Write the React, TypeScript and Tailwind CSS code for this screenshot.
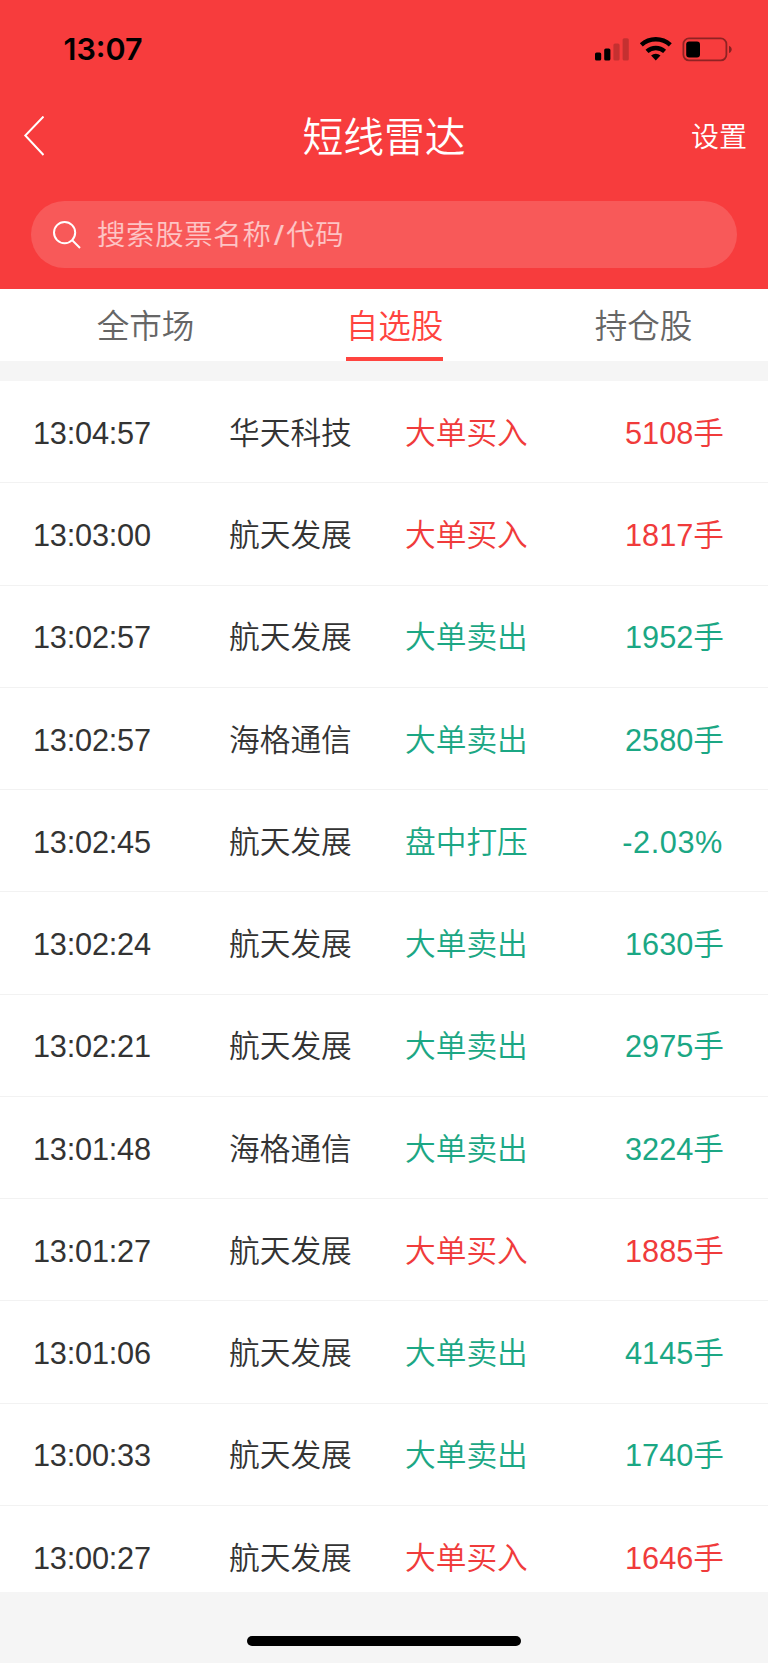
import { useState } from "react";
import clsx from "clsx";

type Side = "buy" | "sell";

const tabs = ["全市场", "自选股", "持仓股"];

const records: { time: string; name: string; event: string; value: string; side: Side }[] = [
  { time: "13:04:57", name: "华天科技", event: "大单买入", value: "5108手", side: "buy" },
  { time: "13:03:00", name: "航天发展", event: "大单买入", value: "1817手", side: "buy" },
  { time: "13:02:57", name: "航天发展", event: "大单卖出", value: "1952手", side: "sell" },
  { time: "13:02:57", name: "海格通信", event: "大单卖出", value: "2580手", side: "sell" },
  { time: "13:02:45", name: "航天发展", event: "盘中打压", value: "-2.03%", side: "sell" },
  { time: "13:02:24", name: "航天发展", event: "大单卖出", value: "1630手", side: "sell" },
  { time: "13:02:21", name: "航天发展", event: "大单卖出", value: "2975手", side: "sell" },
  { time: "13:01:48", name: "海格通信", event: "大单卖出", value: "3224手", side: "sell" },
  { time: "13:01:27", name: "航天发展", event: "大单买入", value: "1885手", side: "buy" },
  { time: "13:01:06", name: "航天发展", event: "大单卖出", value: "4145手", side: "sell" },
  { time: "13:00:33", name: "航天发展", event: "大单卖出", value: "1740手", side: "sell" },
  { time: "13:00:27", name: "航天发展", event: "大单买入", value: "1646手", side: "buy" },
];

function StatusBar() {
  return (
    <div className="flex h-[98px] items-center justify-between pl-[63.5px] pr-9">
      <span className="pt-px font-['Inter',sans-serif] text-[30.5px] leading-none font-semibold text-black">
        13:07
      </span>
      <svg width="138" height="26" viewBox="594 35.5 138 26">
        {/* Signal */}
        <rect x="595" y="52" width="6.2" height="8" rx="1.6" />
        <rect x="604.2" y="48" width="6.2" height="12" rx="1.6" />
        <rect x="613.4" y="43" width="6.2" height="17" rx="1.6" fillOpacity="0.2" />
        <rect x="622.6" y="37.7" width="6.2" height="22.3" rx="1.6" fillOpacity="0.2" />
        {/* Wifi */}
        <g fill="none" stroke="#000" strokeWidth="4.4">
          <path d="M641.3 44.3a21.6 21.6 0 0 1 29 0" />
          <path d="M647 50.8a13.2 13.2 0 0 1 17.6 0" />
        </g>
        <path d="M655.8 60l-4.7-4.9a6.8 6.8 0 0 1 9.4 0z" />
        {/* Battery */}
        <rect x="683.4" y="37.9" width="43" height="22" rx="5.6" fill="none" stroke="#000" strokeOpacity="0.42" strokeWidth="1.8" />
        <rect x="686.2" y="41" width="13.8" height="16" rx="3" />
        <path d="M729 45.2c3.6 1.4 3.6 6 0 7.2z" fillOpacity="0.45" />
      </svg>
    </div>
  );
}

export default function App() {
  const [active, setActive] = useState(1);

  return (
    <div className="flex h-[1663px] w-[768px] flex-col overflow-hidden bg-[#f5f5f5] font-['Liberation_Sans','Noto_Sans_CJK_SC',sans-serif] font-[350]">
      <header className="h-[289px] shrink-0 bg-[#f73c3d] text-white">
        <StatusBar />

        {/* Title */}
        <div className="grid h-[76px] grid-cols-[1fr_auto_1fr] items-center pr-[21px] pl-[23px]">
          <svg width="21" height="40" viewBox="0 0 21 40" fill="none" stroke="currentColor" strokeWidth="2">
            <path d="M20.5 0.5L2.3 19.5l18.2 19.5" />
          </svg>
          <h1 className="pt-[5px] pr-[2px] text-[40.8px] leading-none">短线雷达</h1>
          <button className="justify-self-end pt-1 text-[28px] leading-none">设置</button>
        </div>

        {/* Search */}
        <div className="mx-[31px] mt-[27px] flex h-[67px] items-center rounded-full bg-white/15 pl-[22px]">
          <svg width="28" height="28" viewBox="0 0 28 28" fill="none" stroke="currentColor" strokeWidth="2">
            <circle cx="11.6" cy="11.6" r="10.6" />
            <path d="M19 19l8 8" />
          </svg>
          <span className="ml-4 pt-[2px] text-[28.4px] leading-none tracking-[0.7px] text-white/65">
            搜索股票名称
            <span className="mr-[3px] ml-[3px] inline-block scale-x-125">/</span>
            代码
          </span>
        </div>
      </header>

      {/* Tabs */}
      <nav className="grid h-[72px] shrink-0 grid-cols-[249px_249px_249px] bg-white pl-[21px]">
        {tabs.map((tab, i) => (
          <button
            key={tab}
            onClick={() => setActive(i)}
            className={clsx(
              "h-[72px] justify-self-center border-b-4 pt-2 text-[32.6px] leading-none",
              i === active ? "border-[#ff443f] text-[#ff443f]" : "border-transparent text-[#666]"
            )}
          >
            {tab}
          </button>
        ))}
      </nav>

      {/* Records */}
      <main className="mt-5 h-[1211px] shrink-0 overflow-hidden bg-white">
        {records.map((r) => (
          <div
            key={r.time + r.name}
            className="grid h-[102.27px] grid-cols-[196px_176px_1fr_auto] items-center border-b-[1.5px] border-[#f2f2f2] pt-[5px] pr-11 pl-[33px] text-[30.7px] leading-none text-[#333]"
          >
            <span className="tracking-[-0.2px]">{r.time}</span>
            <span>{r.name}</span>
            <span className={r.side === "buy" ? "text-[#f03b3b]" : "text-[#1ba784]"}>{r.event}</span>
            <span
              className={clsx(
                r.side === "buy" ? "text-[#f03b3b]" : "text-[#1ba784]",
                r.value.endsWith("%") && "pr-px tracking-[0.6px]"
              )}
            >
              {r.value}
            </span>
          </div>
        ))}
      </main>

      {/* Home indicator */}
      <div className="mx-auto mt-11 h-2.5 w-[274px] shrink-0 rounded-full bg-black" />
    </div>
  );
}
